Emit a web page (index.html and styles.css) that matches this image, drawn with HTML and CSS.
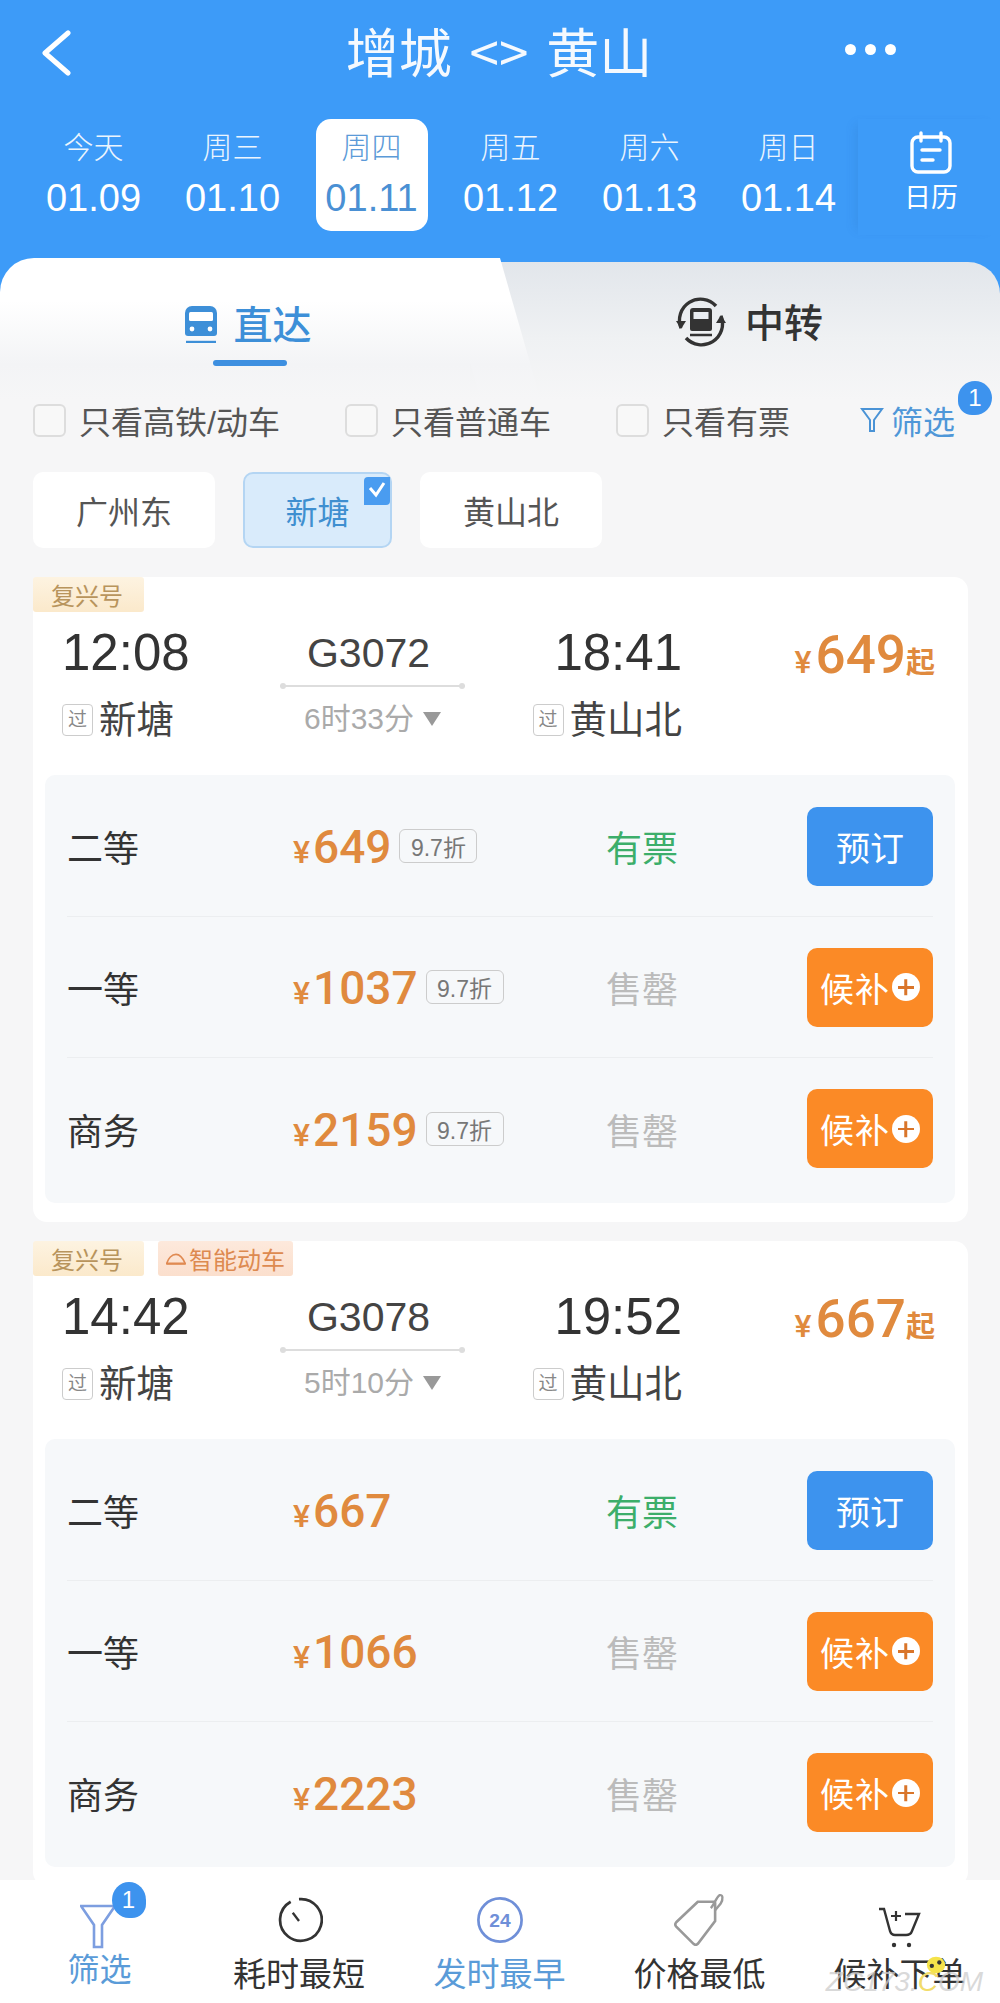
FILE: index.html
```html
<!DOCTYPE html>
<html lang="zh-CN">
<head>
  <meta charset="UTF-8">
  <meta name="viewport" content="width=device-width, initial-scale=1.0">
  <title>增城 - 黄山</title>
  <link rel="stylesheet" href="styles.css">
</head>
<body>
  <div id="page">
    <header id="top">
      <div class="nav">
        <svg class="back" viewBox="0 0 32 46"><path d="M28 3 L5 23 L28 43" fill="none" stroke="#fff" stroke-width="5" stroke-linejoin="round" stroke-linecap="round"/></svg>
        <div class="title">增城 &lt;&gt; 黄山</div>
        <div class="dots"><span></span><span></span><span></span></div>
      </div>
      <div class="dates">
        <div class="date"><span class="day">今天</span><span class="num">01.09</span></div>
        <div class="date"><span class="day">周三</span><span class="num">01.10</span></div>
        <div class="date active"><span class="day">周四</span><span class="num">01.11</span></div>
        <div class="date"><span class="day">周五</span><span class="num">01.12</span></div>
        <div class="date"><span class="day">周六</span><span class="num">01.13</span></div>
        <div class="date"><span class="day">周日</span><span class="num">01.14</span></div>
        <div class="calendar">
          <svg viewBox="0 0 44 44"><rect x="3" y="6" width="38" height="35" rx="6" fill="none" stroke="#fff" stroke-width="3.4"/><path d="M12 2v8M32 2v8M13 19h18M13 29h11" stroke="#fff" stroke-width="3.4" stroke-linecap="round"/></svg>
          <span>日历</span>
        </div>
      </div>
    </header>

    <div class="tabs">
      <div class="tab on">
        <svg class="tab-icon" viewBox="0 0 34 38"><path d="M8 1h18a7 7 0 0 1 7 7v20a3 3 0 0 1-3 3H4a3 3 0 0 1-3-3V8a7 7 0 0 1 7-7z" fill="#3d8fd8"/><rect x="5" y="7" width="24" height="9" rx="1.5" fill="#fff"/><circle cx="8" cy="24" r="2.4" fill="#fff"/><circle cx="26" cy="24" r="2.4" fill="#fff"/><path d="M2 37h30" stroke="#3d8fd8" stroke-width="2.4"/></svg>
        <span>直达</span>
        <i class="under"></i>
      </div>
      <div class="tab off">
        <svg class="tab-icon big" viewBox="0 0 52 52"><path d="M6 32A21 21 0 0 1 41 10M46 20A21 21 0 0 1 11 42" fill="none" stroke="#333" stroke-width="3.4"/><path d="M1 25l5 8 5-8zM51 27l-5-8-5 8z" fill="#333"/><path d="M18 12h16a3 3 0 0 1 3 3v18a2 2 0 0 1-2 2H17a2 2 0 0 1-2-2V15a3 3 0 0 1 3-3z" fill="#333"/><rect x="18.500" y="16" width="15" height="7" fill="#e9edf1"/><path d="M15 39h22" stroke="#333" stroke-width="2.500"/></svg>
        <span>中转</span>
      </div>
    </div>

    <main id="content">
      <div class="filters">
        <label class="check"><i></i>只看高铁/动车</label>
        <label class="check"><i></i>只看普通车</label>
        <label class="check"><i></i>只看有票</label>
        <div class="screen">
          <svg viewBox="0 0 24 28"><path d="M2 3h20l-8 11v11h-4V14z" fill="none" stroke="#4a93d6" stroke-width="2"/></svg>
          <span>筛选</span>
          <b class="badge">1</b>
        </div>
      </div>

      <div class="chips">
        <div class="chip">广州东</div>
        <div class="chip sel">新塘
          <svg class="tick" viewBox="0 0 26 28"><path d="M0 4a4 4 0 0 1 4-4h22v24a4 4 0 0 1-4 4H0z" fill="#4a9cf0"/><path d="M6 11l6 7 8-12" fill="none" stroke="#fff" stroke-width="3"/></svg>
        </div>
        <div class="chip">黄山北</div>
      </div>

      <section class="card">
        <div class="tags"><span class="tag gold">复兴号</span></div>
        <div class="trip">
          <div class="dep">
            <div class="time">12:08</div>
            <div class="station"><i>过</i>新塘</div>
          </div>
          <div class="mid">
            <div class="no">G3072</div>
            <div class="line"></div>
            <div class="dur">6时33分<i></i></div>
          </div>
          <div class="arr">
            <div class="time">18:41</div>
            <div class="station"><i>过</i>黄山北</div>
          </div>
          <div class="from"><small>¥</small>649<em>起</em></div>
        </div>
        <div class="seats">
          <div class="seat">
            <div class="name">二等</div>
            <div class="price"><small>¥</small>649<span class="off-tag">9.7折</span></div>
            <div class="left yes">有票</div>
            <div class="btn">预订</div>
          </div>
          <div class="seat">
            <div class="name">一等</div>
            <div class="price"><small>¥</small>1037<span class="off-tag">9.7折</span></div>
            <div class="left">售罄</div>
            <div class="btn wait">候补<i class="plus"></i></div>
          </div>
          <div class="seat">
            <div class="name">商务</div>
            <div class="price"><small>¥</small>2159<span class="off-tag">9.7折</span></div>
            <div class="left">售罄</div>
            <div class="btn wait">候补<i class="plus"></i></div>
          </div>
        </div>
      </section>

      <section class="card">
        <div class="tags">
          <span class="tag gold">复兴号</span>
          <span class="tag red">
            <svg viewBox="0 0 30 18"><path d="M1 16C3 8 9 2 15 2c6 0 11 7 14 14z" fill="none" stroke="#e08a52" stroke-width="2.400"/><path d="M1 16h28" stroke="#e08a52" stroke-width="3"/></svg>智能动车
          </span>
        </div>
        <div class="trip">
          <div class="dep">
            <div class="time">14:42</div>
            <div class="station"><i>过</i>新塘</div>
          </div>
          <div class="mid">
            <div class="no">G3078</div>
            <div class="line"></div>
            <div class="dur">5时10分<i></i></div>
          </div>
          <div class="arr">
            <div class="time">19:52</div>
            <div class="station"><i>过</i>黄山北</div>
          </div>
          <div class="from"><small>¥</small>667<em>起</em></div>
        </div>
        <div class="seats">
          <div class="seat">
            <div class="name">二等</div>
            <div class="price"><small>¥</small>667</div>
            <div class="left yes">有票</div>
            <div class="btn">预订</div>
          </div>
          <div class="seat">
            <div class="name">一等</div>
            <div class="price"><small>¥</small>1066</div>
            <div class="left">售罄</div>
            <div class="btn wait">候补<i class="plus"></i></div>
          </div>
          <div class="seat">
            <div class="name">商务</div>
            <div class="price"><small>¥</small>2223</div>
            <div class="left">售罄</div>
            <div class="btn wait">候补<i class="plus"></i></div>
          </div>
        </div>
      </section>
    </main>

    <footer id="bar">
      <div class="item blue first">
        <div class="ico">
          <svg viewBox="0 0 40 46" class="funnel"><path d="M1 3h34L22 22v22h-8V22z" fill="none" stroke="#7d9ee0" stroke-width="2.600"/></svg>
          <b class="badge">1</b>
        </div>
        <span>筛选</span>
      </div>
      <div class="item">
        <div class="ico">
          <svg viewBox="0 0 44 48"><path d="M14 6.500A20 20 0 1 0 22 4" fill="none" stroke="#333" stroke-width="2.600"/><path d="M16 17l6 8" stroke="#333" stroke-width="2.200"/></svg>
        </div>
        <span>耗时最短</span>
      </div>
      <div class="item blue">
        <div class="ico">
          <svg viewBox="0 0 50 50" class="clock24"><circle cx="25" cy="25" r="22.500" fill="none" stroke="#6f8fd8" stroke-width="2.800"/><text x="25" y="32" text-anchor="middle" class="n24">24</text></svg>
        </div>
        <span>发时最早</span>
      </div>
      <div class="item">
        <div class="ico">
          <svg viewBox="0 0 50 50" class="pricetag"><path d="M23 9L3 28a3 3 0 0 0 0 4l16 16a3 3 0 0 0 4 0l16-21V10a1 1 0 0 0-1-1z" fill="none" stroke="#999" stroke-width="2.400"/><path d="M35 15c3-3 5-10 8-12 3-1 4 3 1 8l-5 6" fill="none" stroke="#999" stroke-width="2.200"/></svg>
        </div>
        <span>价格最低</span>
      </div>
      <div class="item">
        <div class="ico">
          <svg viewBox="0 0 46 42" class="cart"><path d="M2 2h5l6 22c1 3 3 4 5 4h11c3 0 5-1 6-4l7-17H28" fill="none" stroke="#333" stroke-width="2.400"/><path d="M19 4v10M14 9h10" stroke="#333" stroke-width="2.200"/><circle cx="17" cy="38" r="2.200" fill="#333"/><circle cx="32" cy="38" r="2.200" fill="#333"/></svg>
        </div>
        <span>候补下单</span>
      </div>
      <div class="mark">ZC173.<span>C</span>OM</div>
      <svg class="smile" viewBox="0 0 26 24"><ellipse cx="13" cy="12" rx="11" ry="10" fill="#f5e34a"/><circle cx="8" cy="13" r="2.600" fill="#333"/><circle cx="17" cy="9" r="2.600" fill="#333"/></svg>
    </footer>
  </div>
</body>
</html>
```

FILE: styles.css
```css
* {
  box-sizing: border-box;
}

html, body {
  margin: 0;
  padding: 0;
}

body {
  font-family: "Liberation Sans", "Noto Sans CJK SC", sans-serif;
  color: #333;
  background: #f6f6f7;
}

#page {
  width: 1000px;
  height: 2003px;
  overflow: hidden;
  display: flex;
  flex-direction: column;
  background: #3d9bf8;
}

/* header */
#top {
  height: 258px;
  flex: none;
  color: #fff;
}

.nav {
  height: 119px;
  padding: 0 42px 14px 40px;
  display: grid;
  grid-template-columns: 1fr auto 1fr;
  align-items: center;
}

.back {
  width: 32px;
  height: 46px;
}

.title {
  margin-top: -6px;
  font-size: 53px;
  line-height: 60px;
  word-spacing: 6px;
  font-family: "Noto Sans CJK SC", sans-serif;
  font-weight: 400;
  opacity: .95;
}

.dots {
  display: flex;
  justify-content: flex-end;
  gap: 9px;
  padding-right: 62px;
  margin-top: -6px;
}

.dots span {
  width: 11px;
  height: 11px;
  border-radius: 50%;
  background: #fff;
}

.dates {
  display: flex;
  padding-left: 24px;
}

.date {
  width: 139px;
  height: 112px;
  display: flex;
  flex-direction: column;
  align-items: center;
}

.date .day {
  margin-top: 11px;
  font-size: 30px;
  line-height: 36px;
  font-weight: 300;
  opacity: .9;
}

.date .num {
  margin-top: 12px;
  font-size: 38px;
  line-height: 40px;
}

.date.active {
  width: 112px;
  margin: 0 13.5px;
  background: #fff;
  border-radius: 15px;
  color: #4a90d4;
}

.calendar {
  width: 142px;
  height: 116px;
  padding: 12px 0 0 4px;
  display: flex;
  flex-direction: column;
  align-items: center;
  box-shadow: -8px 0 10px -6px rgba(40, 100, 170, .18);
}

.calendar svg {
  width: 44px;
  height: 44px;
}

.calendar span {
  margin-top: 6px;
  font-size: 27px;
  line-height: 34px;
}

/* tabs */
.tabs {
  height: 142px;
  flex: none;
  display: flex;
  background: #3d9bf8;
}

.tab {
  display: flex;
  align-items: flex-start;
  justify-content: center;
  font-size: 39px;
  font-weight: 500;
  line-height: 50px;
  font-family: "Noto Sans CJK SC", sans-serif;
}

.tab.on {
  position: relative;
  width: 470px;
  padding: 39px 0 0 26px;
  color: #3d8fd8;
  background: linear-gradient(#fff 30%, #f3f4f6 75%, #f6f6f7);
  border-radius: 34px 0 0 0;
  z-index: 1;
}

/* slanted right edge of the active tab */
.tab.on::after {
  content: "";
  position: absolute;
  top: 0;
  right: -30px;
  width: 60px;
  height: 100%;
  background: linear-gradient(#fff 30%, #f3f4f6 75%, #f6f6f7);
  border-radius: 24px 0 0 0;
  transform: skewX(16deg);
  transform-origin: top;
  z-index: -1;
}

.tab.on span {
  margin-left: 15px;
}

.tab.off {
  flex: 1;
  margin-top: 4px;
  padding: 33px 0 0 28px;
  background: linear-gradient(#e2e6eb, #eff1f3 55%, #f6f6f7);
  border-radius: 0 32px 0 0;
}

.tab.off span {
  margin-left: 18px;
  color: #333;
}

.tab-icon {
  width: 34px;
  height: 38px;
  margin-top: 8px;
}

.tab-icon.big {
  width: 52px;
  height: 52px;
  margin-top: 1px;
}

.under {
  position: absolute;
  left: 213px;
  bottom: 34px;
  width: 74px;
  height: 6px;
  border-radius: 3px;
  background: #3d8fe0;
}

/* content */
#content {
  flex: 1;
  min-height: 0;
  background: #f6f6f7;
}

.filters {
  position: relative;
  z-index: 2;
  height: 40px;
  padding: 0 45px 0 33px;
  display: flex;
  align-items: center;
  gap: 65px;
}

.check {
  display: flex;
  align-items: center;
  font-size: 32px;
  color: #555;
}

.check i {
  width: 33px;
  height: 33px;
  margin-right: 13px;
  border: 2px solid #ddd;
  border-radius: 6px;
  background: #f8f8f8;
}

.screen {
  position: relative;
  margin-left: auto;
  display: flex;
  align-items: center;
  gap: 7px;
  font-size: 32px;
  color: #4f97d8;
}

.screen svg {
  width: 24px;
  height: 28px;
}

.badge {
  display: block;
  width: 34px;
  height: 34px;
  border-radius: 50% 50% 50% 14px;
  background: #3d93ee;
  color: #fff;
  font-size: 24px;
  font-weight: 400;
  line-height: 34px;
  text-align: center;
}

.screen .badge {
  position: absolute;
  top: -16px;
  right: -37px;
}

.chips {
  display: flex;
  gap: 28px;
  margin: 32px 0 29px 33px;
}

.chip {
  position: relative;
  width: 182px;
  height: 76px;
  display: flex;
  align-items: center;
  justify-content: center;
  background: #fff;
  border-radius: 10px;
  font-size: 32px;
  color: #555;
}

.chip.sel {
  width: 149px;
  background: #d9ebfb;
  border: 2px solid #b4d5f3;
  color: #3f8fd0;
}

.tick {
  position: absolute;
  top: 3px;
  right: 0;
  width: 26px;
  height: 28px;
}

/* train cards */
.card {
  margin: 0 32px 19px 33px;
  padding-bottom: 19px;
  background: #fff;
  border-radius: 14px;
}

.tags {
  height: 35px;
  display: flex;
  gap: 14px;
}

.tag {
  height: 35px;
  padding: 0 18px;
  display: flex;
  align-items: center;
  font-size: 24px;
  border-radius: 3px;
}

.tag.gold {
  width: 111px;
  color: #b8945c;
  background: linear-gradient(#fdf3e1, #fbe9cb);
}

.tag.red {
  width: 135px;
  padding: 0 8px;
  color: #dd8a50;
  background: linear-gradient(#fde9dc, #fbdfcd);
  white-space: nowrap;
}

.tag.red svg {
  width: 26px;
  height: 16px;
  margin-right: 3px;
}

.trip {
  height: 163px;
  padding: 16px 33px 0 29px;
  display: flex;
}

.dep {
  width: 218px;
}

.mid {
  width: 185px;
  display: flex;
  flex-direction: column;
  align-items: center;
}

.arr {
  width: 217px;
  display: flex;
  flex-direction: column;
  align-items: flex-end;
}

.time {
  font-size: 51px;
  line-height: 50px;
  color: #333;
}

.station {
  margin-top: 18px;
  display: flex;
  align-items: center;
  font-size: 37.5px;
  line-height: 48px;
  color: #444;
}

.station i {
  width: 31px;
  height: 32px;
  margin-right: 6px;
  display: flex;
  align-items: center;
  justify-content: center;
  border: 1.5px solid #ccc;
  border-radius: 4px;
  font-size: 19px;
  font-style: normal;
  color: #888;
}

.no {
  margin: 3px 8px 0 0;
  font-size: 41px;
  line-height: 44px;
  color: #444;
}

.line {
  position: relative;
  width: 100%;
  height: 2px;
  margin-top: 10px;
  background: #ddd;
}

.line::before,
.line::after {
  content: "";
  position: absolute;
  top: -2px;
  width: 6px;
  height: 6px;
  border-radius: 50%;
  background: #ddd;
}

.line::before {
  left: 0;
}

.line::after {
  right: 0;
}

.dur {
  margin-top: 14px;
  display: flex;
  align-items: center;
  font-size: 30px;
  line-height: 36px;
  color: #aaa;
}

.dur i {
  margin-left: 9px;
  border-top: 14px solid #999;
  border-left: 9px solid transparent;
  border-right: 9px solid transparent;
}

.from {
  flex: 1;
  padding-top: 2px;
  text-align: right;
  font-family: Roboto, "Noto Sans CJK SC", sans-serif;
  font-size: 53px;
  font-weight: 500;
  line-height: 50px;
  white-space: nowrap;
  color: #e08a3e;
}

.from small {
  font-size: 32px;
  margin-right: 4px;
  font-weight: 500;
}

.from em {
  font-size: 29px;
  font-style: normal;
  font-weight: 700;
}

.seats {
  margin: 0 13px 0 12px;
  padding: 1px 0 4px;
  background: #f6f8fa;
  border-radius: 10px;
}

.seat {
  height: 141px;
  margin: 0 22px;
  display: grid;
  grid-template-columns: 226px 313px 1fr auto;
  align-items: center;
  border-bottom: 1.5px solid #eceef0;
}

.seat:last-child {
  border-bottom: none;
}

.name {
  font-size: 36px;
  color: #333;
}

.price {
  display: flex;
  align-items: baseline;
  padding-top: 2px;
  font-family: Roboto, "Noto Sans CJK SC", sans-serif;
  font-size: 46px;
  font-weight: 500;
  color: #e08a3e;
}

.price small {
  font-size: 32px;
  font-weight: 500;
  margin-right: 3px;
}

.off-tag {
  align-self: center;
  width: 78px;
  height: 34px;
  margin: -2px 0 0 8px;
  display: flex;
  align-items: center;
  justify-content: center;
  border: 1.5px solid #ccc;
  border-radius: 6px;
  font-family: "Liberation Sans", "Noto Sans CJK SC", sans-serif;
  font-size: 23px;
  font-weight: 400;
  color: #777;
}

.left {
  font-size: 36px;
  color: #bbb;
}

.left.yes {
  color: #3cae6a;
}

.btn {
  width: 126px;
  height: 79px;
  display: flex;
  align-items: center;
  justify-content: center;
  border-radius: 10px;
  background: #3d93ee;
  color: #fff;
  font-size: 34px;
}

.btn.wait {
  background: #fb8a26;
  letter-spacing: 1px;
}

.plus {
  position: relative;
  width: 28px;
  height: 28px;
  margin-left: 2px;
  border-radius: 50%;
  background: #fff;
}

.plus::before,
.plus::after {
  content: "";
  position: absolute;
  left: 6px;
  top: 13px;
  width: 16px;
  height: 2.5px;
  background: #d9752a;
}

.plus::after {
  transform: rotate(90deg);
}

/* bottom bar */
#bar {
  position: relative;
  z-index: 3;
  flex: none;
  height: 123px;
  display: grid;
  grid-template-columns: 199px 200px 201px 199px 201px;
  background: #fff;
}

.item {
  display: flex;
  flex-direction: column;
  align-items: center;
  font-size: 33px;
  line-height: 44px;
  color: #333;
}

.item span {
  margin-top: 5px;
  white-space: nowrap;
}

.item.blue {
  color: #5a9bd8;
}

.item.first span {
  margin-top: 0;
  font-size: 32px;
}

.ico {
  position: relative;
  height: 68px;
  padding-top: 15px;
}

.ico svg {
  display: block;
  width: 48px;
  height: 50px;
}

.ico .funnel {
  width: 40px;
  height: 46px;
  margin-top: 8px;
}

.ico .pricetag {
  width: 54px;
  height: 54px;
  margin-top: -3px;
}

.ico .cart {
  width: 46px;
  height: 42px;
  margin-top: 12px;
}

.ico .badge {
  position: absolute;
  top: 2px;
  right: -26px;
  border-radius: 50% 50% 14px 50%;
  height: 36px;
  line-height: 36px;
}

.n24 {
  font-family: "Liberation Sans", sans-serif;
  font-size: 20px;
  font-weight: 700;
  fill: #6f8fd8;
}

.mark {
  position: absolute;
  right: 17px;
  bottom: 5px;
  font-size: 28px;
  font-style: italic;
  color: rgba(205, 205, 205, .75);
}

.mark span {
  color: #f2dc6a;
}

.smile {
  position: absolute;
  left: 925px;
  top: 75px;
  width: 22px;
  height: 20px;
}
```
